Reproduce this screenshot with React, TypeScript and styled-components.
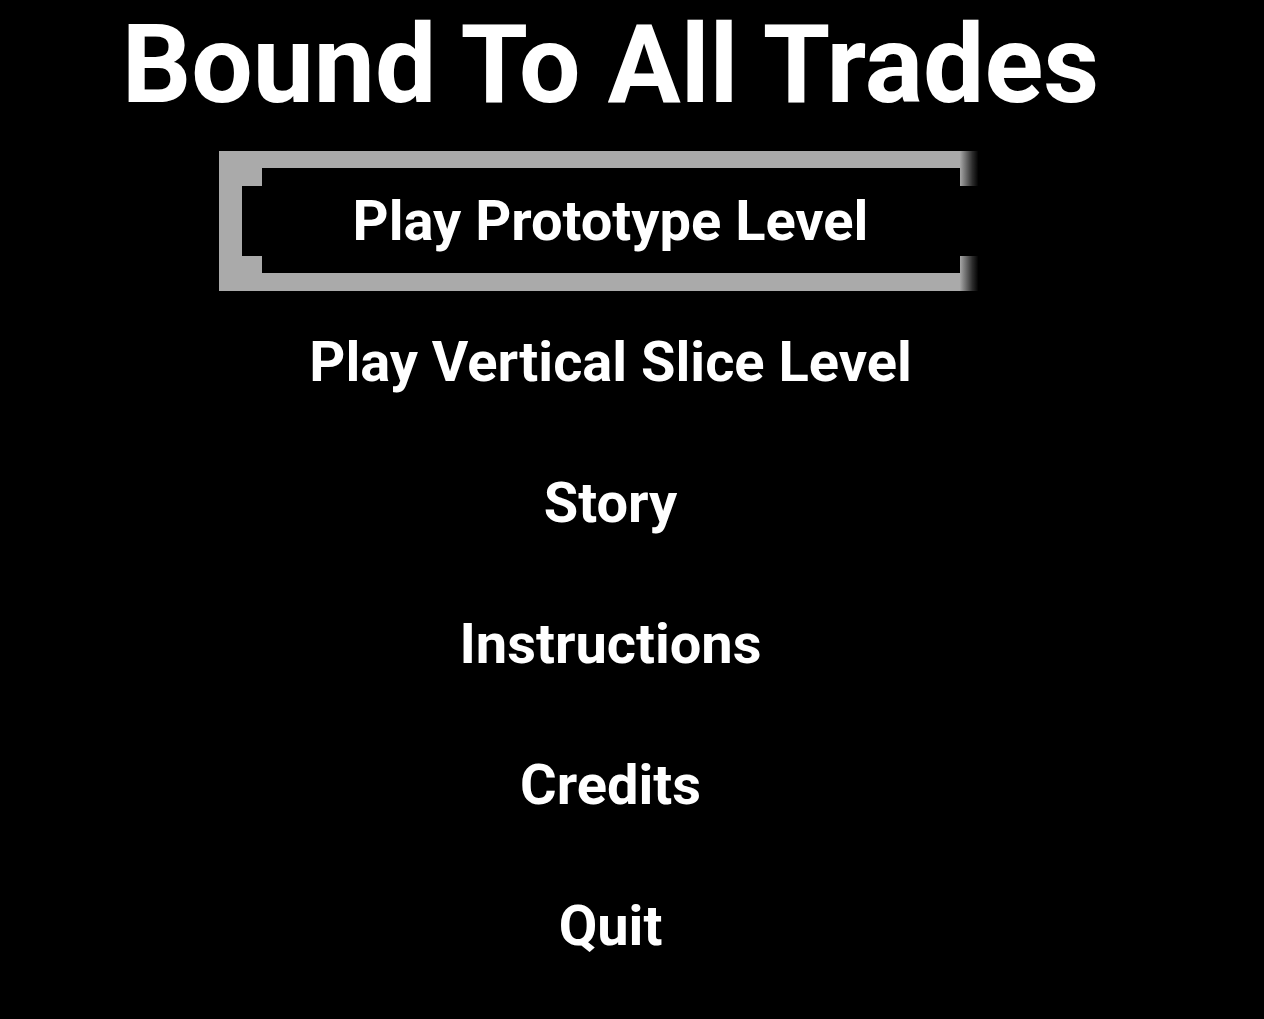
import React, { useState } from 'react';
import styled, { createGlobalStyle } from 'styled-components';

const GlobalStyle = createGlobalStyle`
  html, body {
    margin: 0;
    padding: 0;
    background: #000;
  }
  body {
    font-family: Roboto, "Liberation Sans", sans-serif;
    color: #fff;
  }
`;

const Screen = styled.div`
  width: 1221px;
  height: 1019px;
  background: #000;
  display: flex;
  flex-direction: column;
  align-items: center;
  overflow: hidden;
`;

const Title = styled.h1`
  margin: 0;
  height: 151px;
  font-size: 109px;
  font-weight: 700;
  line-height: 130px;
  letter-spacing: 0;
  white-space: nowrap;
`;

const Menu = styled.div`
  display: flex;
  flex-direction: column;
  align-items: center;
  gap: 1px;
`;

const Item = styled.button<{ $active: boolean }>`
  position: relative;
  width: 783px;
  height: 140px;
  border: 0;
  padding: 0;
  background: transparent;
  color: #fff;
  font-family: inherit;
  font-size: 56px;
  font-weight: 700;
  cursor: pointer;
  display: flex;
  align-items: center;
  justify-content: center;

  & > svg {
    position: absolute;
    inset: 0;
    display: ${(p) => (p.$active ? 'block' : 'none')};
  }
`;

const Label = styled.span`
  position: relative;
  line-height: 1;
  white-space: nowrap;
`;

function Frame() {
  // selection frame, right edge is faded out the way the game renders it
  return (
    <svg width="783" height="140" viewBox="0 0 783 140">
      <defs>
        <linearGradient id="fade" x1="0" x2="783" y1="0" y2="0" gradientUnits="userSpaceOnUse">
          <stop offset="0.946" stopColor="#fff" />
          <stop offset="0.962" stopColor="#444" />
          <stop offset="0.97" stopColor="#000" />
        </linearGradient>
        <mask id="frameMask">
          <rect width="783" height="140" fill="url(#fade)" />
        </mask>
      </defs>
      <g mask="url(#frameMask)">
        <rect width="783" height="140" fill="#aaaaaa" />
        <path
          d="M43 17 H741 V35 H760 V105 H741 V122 H43 V105 H23 V35 H43 Z"
          fill="#000"
        />
      </g>
    </svg>
  );
}

const items = [
  'Play Prototype Level',
  'Play Vertical Slice Level',
  'Story',
  'Instructions',
  'Credits',
  'Quit',
];

export default function App() {
  const [active, setActive] = useState(0);
  return (
    <>
      <GlobalStyle />
      <Screen>
        <Title>Bound To All Trades</Title>
        <Menu>
          {items.map((label, i) => (
            <Item
              key={label}
              type="button"
              $active={i === active}
              onMouseEnter={() => setActive(i)}
            >
              <Frame />
              <Label>{label}</Label>
            </Item>
          ))}
        </Menu>
      </Screen>
    </>
  );
}
